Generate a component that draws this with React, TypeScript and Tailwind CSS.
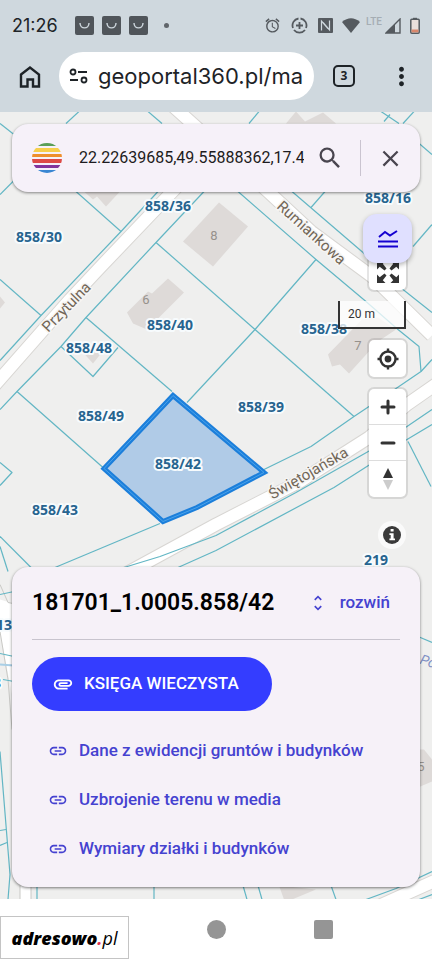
import React from "react";
import {
  MdAlarm,
  MdAttachment,
  MdClose,
  MdLink,
  MdMoreVert,
  MdSearch,
  MdUnfoldMore,
} from "react-icons/md";

const parcelLines = [
  "M0 124 L14 135",
  "M0 195 L14 181",
  "M66 124 L79 112",
  "M148 112 L162 124",
  "M249 124 L259 112",
  "M381 112 L399 124",
  "M384 122 L390 115",
  "M403 124 L414 112",
  "M418 143 L432 155",
  "M76 192 L121 232",
  "M158 192 L121 232 L41 316 L0 361",
  "M0 280 L41 316",
  "M204 192 L156 243 L86 318 L61 347 L17 392 L0 410",
  "M156 243 L255 330 L354 417",
  "M86 318 L172 392",
  "M61 347 L93 377 L118 348",
  "M17 392 L103 468",
  "M238 192 L316 260 L366 302 L398 330 L419 347 L421 372",
  "M292 192 L363 253 L403 290 L432 313",
  "M311 208 L325 192",
  "M316 260 L255 330 L187 403",
  "M413 247 L432 225",
  "M0 463 L12 473 L0 486",
  "M0 537 L31 568",
  "M0 547 L8 572",
  "M55 568 L160 524",
  "M264 470 L311 447 L354 417 L396 389 L421 372 L432 360",
  "M124 568 L160 557 L216 536 L296 493 L370 451 L407 427 L432 410",
  "M178 568 L216 551 L334 488 L370 465 L407 440 L432 425",
  "M408 442 L431 487",
  "M0 595 L14 592",
  "M0 654 L14 657",
  "M3 680 L14 682",
  "M0 752 L10 875 L8 900",
  "M0 831 L6 830",
  "M0 846 L7 843",
  "M37 886 L37 900",
  "M154 886 L154 900",
  "M243 886 L247 900",
  "M258 886 L262 900",
  "M331 886 L336 900",
  "M366 900 L396 889 L432 872",
  "M419 900 L432 895",
  "M418 637 L432 643",
];

const roads = [
  "M170 104 L268 192 L311 232 L372 277 L432 336",
  "M-10 391 L70 300 L100 268 L182 182",
  "M126 574 L216 525 L300 482 L369 438 L407 405 L440 382",
  "M380 906 L440 879",
];

const buildings = [
  "M84 192 L93 200 L97 197 L106 207 L120 192 Z",
  "M183 242 L213 267 L248 227 L219 203 Z",
  "M127 313 L148 292 L152 294 L168 279 L184 293 L147 330 L133 324 Z",
  "M0 297 L5 303 L0 309 Z",
  "M328 355 L332 367 L340 365 L349 374 L378 342 L396 330 L378 318 L362 320 Z",
  "M286 124 L296 112 L305 122 L323 113 L336 124 Z",
  "M84 354 L94 345 L101 354 L93 364 Z",
  "M279 886 L284 900 L292 900 L316 890 Z",
  "M418 750 L424 750 L432 760 L432 782 L418 788 Z",
];

const parcels = [
  { id: "858/36", x: 168, y: 211 },
  { id: "858/16", x: 388, y: 203 },
  { id: "858/30", x: 39, y: 242 },
  { id: "858/40", x: 170, y: 330 },
  { id: "858/38", x: 324, y: 334 },
  { id: "858/48", x: 89, y: 353 },
  { id: "858/49", x: 101, y: 421 },
  { id: "858/39", x: 261, y: 412 },
  { id: "858/42", x: 178, y: 469 },
  { id: "858/43", x: 55, y: 515 },
  { id: "219", x: 376, y: 565 },
  { id: "130", x: 8, y: 630 },
  { id: "8", x: -3, y: 688 },
];

const houseNumbers = [
  { n: "8", x: 214, y: 240 },
  { n: "6", x: 146, y: 304 },
  { n: "7", x: 358, y: 350 },
  { n: "5", x: 421, y: 771 },
];

function ParcelMap() {
  return (
    <svg
      className="absolute inset-0 h-full w-full"
      viewBox="0 112 432 788"
      preserveAspectRatio="xMidYMid slice"
      role="img"
      aria-label="Mapa działek"
    >
      <rect x="0" y="112" width="432" height="788" fill="#efefee" />
      <path d="M0 600 L13 604 L13 700 L0 632 Z" fill="#fff" />
      <path d="M20 886 H31 V900 H20 Z" fill="#fff" />
      <path d="M0 632 L8 680 L12 730 M0 585 L8 603 L13 604 M20 886 V900 M31 886 V900" fill="none" stroke="#c9c9c6" />
      <path d="M0 665 L14 666" stroke="#a9cfe6" strokeWidth="2" />
      {buildings.map((d) => (
        <path key={d} d={d} fill="#dedad8" />
      ))}
      <g fill="none" strokeLinejoin="round">
        {roads.map((d) => (
          <path key={d} d={d} stroke="#d8d6d3" strokeWidth="14" />
        ))}
        {roads.map((d) => (
          <path key={d} d={d} stroke="#fff" strokeWidth="12" />
        ))}
        {parcelLines.map((d) => (
          <path key={d} d={d} stroke="#62b6c4" strokeWidth="1.2" />
        ))}
      </g>
      <path
        d="M173 396 L264 473 L197 508 L163 522 L104 469 Z"
        fill="#b0cbe7"
        stroke="#1c7fdb"
        strokeWidth="5"
      />
      <path
        d="M173 396 L264 473 L197 508 L163 522 L104 469 Z"
        fill="none"
        stroke="#4ba3ea"
        strokeWidth="1"
      />
      <g className="font-['Roboto',sans-serif]" fontSize="13" fill="#96918c" textAnchor="middle">
        {houseNumbers.map((h) => (
          <text key={h.n} x={h.x} y={h.y}>
            {h.n}
          </text>
        ))}
      </g>
      <g
        className="font-['Roboto',sans-serif]"
        fontSize="15"
        fill="#716657"
        stroke="#f6f5f3"
        strokeWidth="3"
        paintOrder="stroke"
        textAnchor="middle"
      >
        <text transform="translate(70 311) rotate(-46)">Przytulna</text>
        <text transform="translate(308 237) rotate(42)">Rumiankowa</text>
        <text transform="translate(311 478) rotate(-30)">Świętojańska</text>
      </g>
      <text
        className="font-['Roboto',sans-serif]"
        transform="translate(419 664) rotate(18)"
        fontSize="14"
        fontStyle="italic"
        fill="#7f8fc4"
      >
        Po
      </text>
      <g
        className="font-['Noto_Sans',sans-serif]"
        fontSize="14"
        fontWeight="700"
        fill="#27648f"
        stroke="#f7fbfd"
        strokeWidth="4"
        strokeLinejoin="round"
        paintOrder="stroke"
        textAnchor="middle"
      >
        {parcels.map((p) => (
          <text key={p.id} x={p.x} y={p.y}>
            {p.id}
          </text>
        ))}
      </g>
    </svg>
  );
}

function BagIcon() {
  return (
    <svg className="h-[19px] w-[19px]" viewBox="0 0 19 19">
      <rect x="0" y="0" width="19" height="19" rx="2" fill="#50555a" />
      <path d="M5 7 C5 13.5 14 13.5 14 7" fill="none" stroke="#cfd8de" strokeWidth="1.4" />
    </svg>
  );
}

function StatusBar() {
  return (
    <div className="flex h-[51px] items-center px-3 text-[#555a5f]">
      <span className="w-[63px] font-['Inter',sans-serif] text-lg text-[#202428]">21:26</span>
      <div className="flex gap-2">
        <BagIcon />
        <BagIcon />
        <BagIcon />
      </div>
      <span className="ml-4 h-[5px] w-[5px] rounded-full bg-[#60656a]" />
      <div className="ml-auto flex items-center">
        <MdAlarm size={17} />
        <svg className="ml-[10px] h-[17px] w-[17px]" viewBox="0 0 17 17" fill="none" stroke="currentColor">
          <path d="M7.500 1.500 A7 7 0 0 0 2 11" strokeWidth="1.800" />
          <path d="M3 13 A7 7 0 0 0 14 13" strokeWidth="1.800" />
          <path d="M15 11 A7 7 0 0 0 9.500 1.500" strokeWidth="1.800" />
          <path d="M8.500 5 V12 M5 8.500 H12" strokeWidth="1.800" />
        </svg>
        <svg className="ml-[10px] h-[15px] w-[15px]" viewBox="0 0 15 15">
          <rect width="15" height="15" rx="1" fill="currentColor" />
          <path d="M3.500 12.500 V3 L10 10.500 M11.500 2.500 V12 L5 4.500" fill="none" stroke="#cfd8de" strokeWidth="1.200" />
        </svg>
        <svg className="ml-[9px] h-[15px] w-[18px]" viewBox="0 0 18 15">
          <path d="M0 4 Q9 -3.500 18 4 L9 15 Z" fill="currentColor" />
        </svg>
        <span className="ml-[6px] -mt-2 font-['Roboto',sans-serif] text-[10px] font-medium text-[#a5adb3]">LTE</span>
        <svg className="ml-[3px] h-[16px] w-[16px]" viewBox="0 0 16 16">
          <path d="M1 15 L15 1 V15 Z" fill="none" stroke="currentColor" strokeWidth="1.4" />
          <path d="M1 15 L10 6 V15 Z" fill="currentColor" />
        </svg>
        <svg className="ml-[9px] h-[17px] w-[10px]" viewBox="0 0 10 17">
          <path d="M3 2 V0.800 H7 V2" fill="currentColor" />
          <rect x="0.800" y="2.200" width="8.400" height="14" rx="1" fill="#e9dfdb" stroke="currentColor" strokeWidth="1.500" />
          <rect x="1.600" y="12.500" width="6.800" height="2.800" fill="#d9876c" />
        </svg>
      </div>
    </div>
  );
}

function BrowserBar() {
  return (
    <div className="flex h-[61px] items-start pl-[18px] pr-4 text-[#1e2327]">
      <button type="button" aria-label="Strona główna" className="mt-[14px] h-6 w-6">
        <svg viewBox="0 0 24 24" fill="none" stroke="currentColor" strokeWidth="2.400">
          <path d="M3 9.500 L12 2.500 L21 9.500 V21.500 H15 V14.500 H9.500 V21.500 H3 Z" />
        </svg>
      </button>
      <div className="ml-[17px] mt-px flex h-12 min-w-0 flex-1 items-center rounded-full bg-white pl-[10px] pr-2">
        <svg className="h-4 w-5 shrink-0" viewBox="0 0 20 16" fill="none" stroke="currentColor" strokeWidth="1.800">
          <circle cx="4" cy="4" r="2.500" />
          <path d="M9 4 H18 M1 12 H9" />
          <circle cx="15" cy="12" r="2.500" />
        </svg>
        <input
          type="text"
          aria-label="Adres strony"
          defaultValue="geoportal360.pl/ma"
          className="ml-[9px] w-full min-w-0 bg-transparent font-['Inter',sans-serif] text-[22px] outline-none"
        />
      </div>
      <button
        type="button"
        aria-label="Otwarte karty"
        className="ml-[19px] mt-[14px] flex h-[22px] w-[22px] items-center justify-center rounded-[5px] border-2 border-current font-['Noto_Sans',sans-serif] text-xs font-bold"
      >
        3
      </button>
      <button type="button" aria-label="Menu" className="ml-8 mt-[11px]">
        <MdMoreVert size={29} />
      </button>
    </div>
  );
}

function SearchCard() {
  return (
    <div className="flex h-[68px] items-center rounded-2xl bg-[#f6f1f9] pl-5 pr-4 shadow-[0_1px_3px_rgba(0,0,0,0.45)]">
      <svg className="h-[30px] w-[30px] shrink-0" viewBox="0 0 30 30">
        <clipPath id="globe">
          <circle cx="15" cy="15" r="15" />
        </clipPath>
        <g clipPath="url(#globe)">
          <rect y="0" width="30" height="3" fill="#5a9e57" />
          <rect y="5" width="30" height="4" fill="#f7cf4c" />
          <rect y="11" width="30" height="3" fill="#ee8f2d" />
          <rect y="16" width="30" height="4" fill="#dd4a46" />
          <rect y="22" width="30" height="3" fill="#82349c" />
          <rect y="27" width="30" height="3" fill="#3a86d2" />
        </g>
      </svg>
      <input
        type="text"
        aria-label="Szukaj"
        defaultValue="22.22639685,49.55888362,17.46"
        className="ml-[17px] w-full min-w-0 bg-transparent font-['Roboto',sans-serif] text-base text-[#1d1b20] outline-none"
      />
      <button type="button" aria-label="Wyszukaj" className="ml-3 shrink-0 text-[#49454f]">
        <MdSearch size={28} />
      </button>
      <span className="ml-4 h-9 w-px shrink-0 bg-[#cac4d0]" />
      <button type="button" aria-label="Wyczyść" className="ml-4 shrink-0 text-[#49454f]">
        <MdClose size={27} />
      </button>
    </div>
  );
}

function MapControls() {
  return (
    <div className="flex flex-col items-end text-[#333]">
      <button
        type="button"
        aria-label="Legenda"
        className="relative z-10 mr-2 mt-[22px] flex h-[49px] w-[49px] items-center justify-center rounded-[14px] bg-[#e0e0ff] text-[#1400d0] shadow-[0_2px_5px_rgba(0,0,0,0.3)]"
      >
        <svg className="h-5 w-5" viewBox="0 0 20 20" fill="none" stroke="currentColor" strokeWidth="2">
          <path d="M1 8 L7 3 L12 6.500 L19 2 M0 12.500 H20 M0 17.500 H20" />
        </svg>
      </button>
      <button
        type="button"
        aria-label="Pełny ekran"
        className="-mt-[10px] mr-[14px] flex h-[37px] w-[37px] items-center justify-center rounded-[5px] bg-white shadow-[0_0_0_2px_rgba(0,0,0,0.1)]"
      >
        <svg className="h-6 w-6" viewBox="0 0 24 24" fill="currentColor">
          {[0, 90, 180, 270].map((angle) => (
            <path
              key={angle}
              transform={`rotate(${angle} 12 12)`}
              d="M1 1 H9.500 L6.800 3.700 L10.500 8.500 L8.500 10.500 L3.700 6.800 L1 9.500 Z"
            />
          ))}
        </svg>
      </button>
      <div className="mr-[14px] mt-[11px] h-7 w-[68px] border-2 border-t-0 border-[#333] bg-white/75 pl-2 font-['Roboto',sans-serif] text-xs leading-[26px]">
        20 m
      </div>
      <button
        type="button"
        aria-label="Moja lokalizacja"
        className="mr-[14px] mt-[11px] flex h-[37px] w-[37px] items-center justify-center rounded-[5px] bg-white shadow-[0_0_0_2px_rgba(0,0,0,0.1)]"
      >
        <svg className="h-[22px] w-[22px]" viewBox="0 0 22 22" fill="none" stroke="currentColor" strokeWidth="2.400">
          <circle cx="11" cy="11" r="7.500" />
          <circle cx="11" cy="11" r="3.400" fill="currentColor" stroke="none" />
          <path d="M11 0.500 V4 M11 18 V21.500 M0.500 11 H4 M18 11 H21.500" />
        </svg>
      </button>
      <div className="mr-[14px] mt-3 flex w-[37px] flex-col divide-y divide-[#ddd] rounded-[5px] bg-white shadow-[0_0_0_2px_rgba(0,0,0,0.1)]">
        <button type="button" aria-label="Przybliż" className="flex h-9 items-center justify-center">
          <svg className="h-4 w-4" viewBox="0 0 16 16" stroke="currentColor" strokeWidth="3" strokeLinecap="round">
            <path d="M8 2 V14 M2 8 H14" />
          </svg>
        </button>
        <button type="button" aria-label="Oddal" className="flex h-9 items-center justify-center">
          <svg className="h-4 w-4" viewBox="0 0 16 16" stroke="currentColor" strokeWidth="3" strokeLinecap="round">
            <path d="M2 8 H14" />
          </svg>
        </button>
        <button type="button" aria-label="Północ" className="flex h-9 items-center justify-center">
          <svg className="h-[22px] w-[10px]" viewBox="0 0 10 22">
            <path d="M0 10 L5 0 L10 10 Z" fill="#333" />
            <path d="M0 12 L5 22 L10 12 Z" fill="#ccc" />
          </svg>
        </button>
      </div>
      <button
        type="button"
        aria-label="Informacje"
        className="mr-[14px] mt-6 flex h-7 w-7 items-center justify-center rounded-full bg-white/70"
      >
        <svg className="h-[18px] w-[18px]" viewBox="0 0 18 18">
          <circle cx="9" cy="9" r="9" fill="#3a3a3a" />
          <path d="M7.600 3 H10.600 V5.600 H7.600 Z M6.400 7.300 H10.600 V12.500 H12 V14.300 H6.400 V12.500 H7.700 V9 H6.400 Z" fill="#fff" />
        </svg>
      </button>
    </div>
  );
}

const panelLinks = [
  "Dane z ewidencji gruntów i budynków",
  "Uzbrojenie terenu w media",
  "Wymiary działki i budynków",
];

function ParcelPanel() {
  return (
    <section className="mt-[18px] rounded-2xl bg-[#f6f1f8] px-5 pb-[14px] font-['Roboto',sans-serif] text-[#4542d0] shadow-[0_1px_3px_rgba(0,0,0,0.5)]">
      <div className="flex h-[73px] items-center justify-between border-b border-[#c8c4ce]">
        <h1 className="text-[23px] font-semibold text-black">181701_1.0005.858/42</h1>
        <button type="button" className="flex items-center gap-3 pr-[10px] text-[17px] font-medium">
          <MdUnfoldMore size={20} />
          rozwiń
        </button>
      </div>
      <button
        type="button"
        className="mt-[17px] flex h-[54px] w-60 items-center gap-[10px] rounded-full bg-[#343dff] pl-5 text-[17px] font-medium text-white"
      >
        <MdAttachment size={22} />
        KSIĘGA WIECZYSTA
      </button>
      <nav className="mt-[15px] flex flex-col pl-4">
        {panelLinks.map((label) => (
          <a key={label} href="#" className="flex h-[49px] items-center gap-[11px] text-[17px] font-medium">
            <MdLink size={20} />
            {label}
          </a>
        ))}
      </nav>
    </section>
  );
}

function NavigationBar() {
  return (
    <footer className="relative flex h-[60px] items-center justify-center gap-[88px] bg-white">
      <button type="button" aria-label="Wstecz" className="h-[19px] w-[19px]" />
      <button type="button" aria-label="Ekran główny" className="h-[19px] w-[19px] rounded-full bg-[#959595]" />
      <button type="button" aria-label="Ostatnie" className="h-[19px] w-[19px] rounded-[2px] bg-[#959595]" />
      <div className="absolute bottom-0 left-0 flex h-[43px] w-[129px] items-center justify-center border border-[#c4c4c4] bg-white font-['Open_Sans',sans-serif] text-lg italic text-black">
        <span className="font-extrabold">adresowo</span>
        <span className="font-bold text-[#e0314f]">.</span>
        <span>pl</span>
      </div>
    </footer>
  );
}

export default function App() {
  return (
    <div className="min-h-screen w-full bg-white">
      <header className="bg-[#cfd8de]">
        <StatusBar />
        <BrowserBar />
      </header>
      <main className="relative overflow-hidden">
        <ParcelMap />
        <div className="relative p-3">
          <SearchCard />
          <MapControls />
          <ParcelPanel />
        </div>
      </main>
      <NavigationBar />
    </div>
  );
}
